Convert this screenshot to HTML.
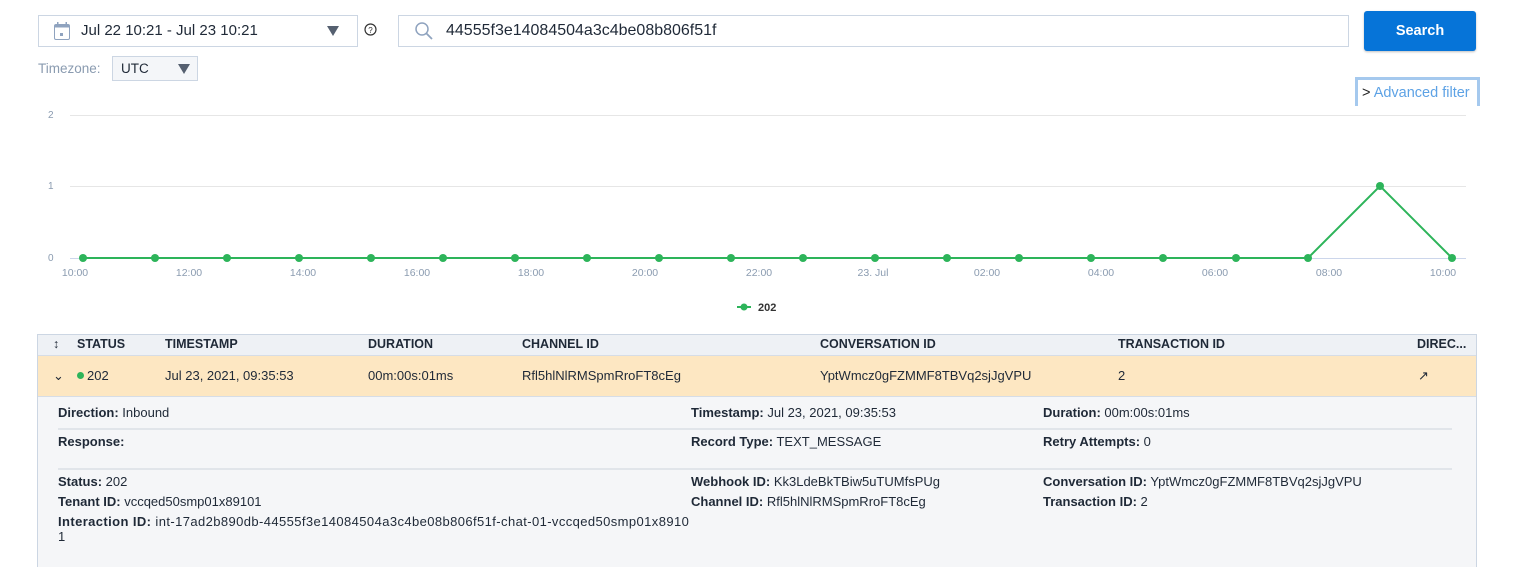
<!DOCTYPE html>
<html><head><style>
body{margin:0;width:1533px;height:567px;overflow:hidden;background:#fff;font-family:"Liberation Sans",sans-serif;color:#1f2937;position:relative}
.abs{position:absolute}
.box{position:absolute;border:1px solid #ccd6e3;background:#fff;box-sizing:border-box}
.t{position:absolute;font-size:13px;white-space:nowrap}
b{font-weight:bold}
.hd{position:absolute;font-size:12.5px;font-weight:bold;top:337px;color:#1f2937}
.rw{position:absolute;font-size:13px;top:368px}
.d{position:absolute;font-size:13px;white-space:nowrap}
.sep{position:absolute;height:2px;background:#e1e5ea}
</style></head><body>
<div class="box" style="left:38px;top:15px;width:320px;height:32px"></div>
<svg class="abs" style="left:53px;top:21px" width="18" height="20" viewBox="0 0 18 20"><rect x="1.5" y="3.5" width="15" height="15" rx="1.5" fill="none" stroke="#8fa3bf"/><rect x="1.5" y="3.5" width="15" height="3" fill="#8fa3bf"/><rect x="4" y="1" width="1.5" height="4" fill="#8fa3bf"/><rect x="12.5" y="1" width="1.5" height="4" fill="#8fa3bf"/><rect x="7" y="12" width="3" height="3" fill="#8fa3bf"/></svg>
<div class="t" style="left:81px;top:22px;font-size:15px">Jul 22 10:21 - Jul 23 10:21</div>
<div class="abs" style="left:327px;top:26px;width:0;height:0;border-left:6px solid transparent;border-right:6px solid transparent;border-top:10px solid #556070"></div>
<svg class="abs" style="left:364px;top:23px" width="13" height="13"><circle cx="6.5" cy="6.5" r="5.5" fill="none" stroke="#333" stroke-width="1.2"/><text x="6.5" y="10" font-size="8" text-anchor="middle" font-family="Liberation Sans" fill="#333">?</text></svg>
<div class="box" style="left:398px;top:15px;width:951px;height:32px"></div>
<svg class="abs" style="left:414px;top:21px" width="20" height="20"><circle cx="8" cy="8" r="6" fill="none" stroke="#8fa3bf" stroke-width="1.5"/><line x1="12.5" y1="12.5" x2="18" y2="18" stroke="#8fa3bf" stroke-width="1.8"/></svg>
<div class="t" style="left:446px;top:22px;font-size:16px">44555f3e14084504a3c4be08b806f51f</div>
<div class="abs" style="left:1364px;top:11px;width:112px;height:40px;background:#0674d8;border-radius:3px;box-shadow:0 1px 2px rgba(0,0,0,.25);color:#fff;font-weight:bold;font-size:14.5px;text-align:center;line-height:40px">Search</div>
<div class="t" style="left:38px;top:61px;color:#8a9bb0;font-size:13.5px">Timezone:</div>
<div class="box" style="left:112px;top:56px;width:86px;height:25px;background:#f4f6f9"></div>
<div class="t" style="left:121px;top:61px;font-size:13.5px">UTC</div>
<div class="abs" style="left:178px;top:64px;border-left:6px solid transparent;border-right:6px solid transparent;border-top:10px solid #556070"></div>
<div class="abs" style="left:1355px;top:77px;width:119px;height:26px;border:3px solid #a5c9ee;border-bottom:none"></div>
<div class="t" style="left:1362px;top:85px;font-size:14.5px;color:#5da2e5"><span style="color:#222">&gt;</span> Advanced filter</div>
<svg class="abs" style="left:0;top:0" width="1533" height="320">
<g font-size="10" fill="#8a9bb0" font-family="Liberation Sans"><text x="48" y="118">2</text><text x="48" y="189">1</text><text x="48" y="261">0</text></g>
<line x1="70" y1="115.5" x2="1466" y2="115.5" stroke="#e6e6e6"/>
<line x1="70" y1="186.5" x2="1466" y2="186.5" stroke="#e6e6e6"/>
<line x1="70" y1="258.5" x2="1466" y2="258.5" stroke="#ccd6eb"/>
<polyline points="83,258 1308,258 1380,186 1452,258" fill="none" stroke="#2db45a" stroke-width="2"/>
<g fill="#2db45a">
<circle cx="83" cy="258" r="4"/><circle cx="155" cy="258" r="4"/><circle cx="227" cy="258" r="4"/><circle cx="299" cy="258" r="4"/><circle cx="371" cy="258" r="4"/><circle cx="443" cy="258" r="4"/><circle cx="515" cy="258" r="4"/><circle cx="587" cy="258" r="4"/><circle cx="659" cy="258" r="4"/><circle cx="731" cy="258" r="4"/><circle cx="803" cy="258" r="4"/><circle cx="875" cy="258" r="4"/><circle cx="947" cy="258" r="4"/><circle cx="1019" cy="258" r="4"/><circle cx="1091" cy="258" r="4"/><circle cx="1163" cy="258" r="4"/><circle cx="1236" cy="258" r="4"/><circle cx="1308" cy="258" r="4"/><circle cx="1380" cy="186" r="4"/><circle cx="1452" cy="258" r="4"/></g>
<line x1="737" y1="307" x2="751" y2="307" stroke="#2db45a" stroke-width="2"/><circle cx="744" cy="307" r="3.5" fill="#2db45a"/>
<g font-size="10.5" fill="#8a9bb0" font-family="Liberation Sans" text-anchor="middle">
<text x="75" y="276">10:00</text><text x="189" y="276">12:00</text><text x="303" y="276">14:00</text><text x="417" y="276">16:00</text><text x="531" y="276">18:00</text><text x="645" y="276">20:00</text><text x="759" y="276">22:00</text><text x="873" y="276">23. Jul</text><text x="987" y="276">02:00</text><text x="1101" y="276">04:00</text><text x="1215" y="276">06:00</text><text x="1329" y="276">08:00</text><text x="1443" y="276">10:00</text></g>
<text x="758" y="311" font-size="11" font-weight="bold" fill="#333" font-family="Liberation Sans">202</text>
</svg>
<div class="abs" style="left:37px;top:334px;width:1440px;height:233px;border:1px solid #ccd6e3;border-bottom:none;box-sizing:border-box;background:#f5f6f8"></div>
<div class="abs" style="left:38px;top:335px;width:1438px;height:20px;background:#eef1f5;border-bottom:1px solid #d6dde6"></div>
<div class="abs" style="left:38px;top:356px;width:1438px;height:40px;background:#fde7c2;border-bottom:1px solid #d6dde6"></div>
<div class="hd" style="left:53px;font-weight:normal">↕</div>
<div class="hd" style="left:77px">STATUS</div><div class="hd" style="left:165px">TIMESTAMP</div><div class="hd" style="left:368px">DURATION</div><div class="hd" style="left:522px">CHANNEL ID</div><div class="hd" style="left:820px">CONVERSATION ID</div><div class="hd" style="left:1118px">TRANSACTION ID</div><div class="hd" style="left:1417px">DIREC...</div>
<div class="rw" style="left:53px">⌄</div>
<div class="abs" style="left:77px;top:372px;width:7px;height:7px;border-radius:50%;background:#2db45a"></div>
<div class="rw" style="left:87px">202</div><div class="rw" style="left:165px">Jul 23, 2021, 09:35:53</div><div class="rw" style="left:368px">00m:00s:01ms</div><div class="rw" style="left:522px">Rfl5hlNlRMSpmRroFT8cEg</div><div class="rw" style="left:820px">YptWmcz0gFZMMF8TBVq2sjJgVPU</div><div class="rw" style="left:1118px">2</div><div class="rw" style="left:1418px">↗</div>
<div class="d" style="left:58px;top:405px"><b>Direction:</b> Inbound</div>
<div class="d" style="left:691px;top:405px"><b>Timestamp:</b> Jul 23, 2021, 09:35:53</div>
<div class="d" style="left:1043px;top:405px"><b>Duration:</b> 00m:00s:01ms</div>
<div class="sep" style="left:58px;top:428px;width:1394px"></div>
<div class="d" style="left:58px;top:434px"><b>Response:</b></div>
<div class="d" style="left:691px;top:434px"><b>Record Type:</b> TEXT_MESSAGE</div>
<div class="d" style="left:1043px;top:434px"><b>Retry Attempts:</b> 0</div>
<div class="sep" style="left:58px;top:468px;width:1394px"></div>
<div class="d" style="left:58px;top:474px"><b>Status:</b> 202</div>
<div class="d" style="left:58px;top:494px"><b>Tenant ID:</b> vccqed50smp01x89101</div>
<div class="d" style="left:58px;top:514px;line-height:15px;letter-spacing:0.4px"><b>Interaction ID:</b> int-17ad2b890db-44555f3e14084504a3c4be08b806f51f-chat-01-vccqed50smp01x8910<br>1</div>
<div class="d" style="left:691px;top:474px"><b>Webhook ID:</b> Kk3LdeBkTBiw5uTUMfsPUg</div>
<div class="d" style="left:691px;top:494px"><b>Channel ID:</b> Rfl5hlNlRMSpmRroFT8cEg</div>
<div class="d" style="left:1043px;top:474px"><b>Conversation ID:</b> YptWmcz0gFZMMF8TBVq2sjJgVPU</div>
<div class="d" style="left:1043px;top:494px"><b>Transaction ID:</b> 2</div>
</body></html>
